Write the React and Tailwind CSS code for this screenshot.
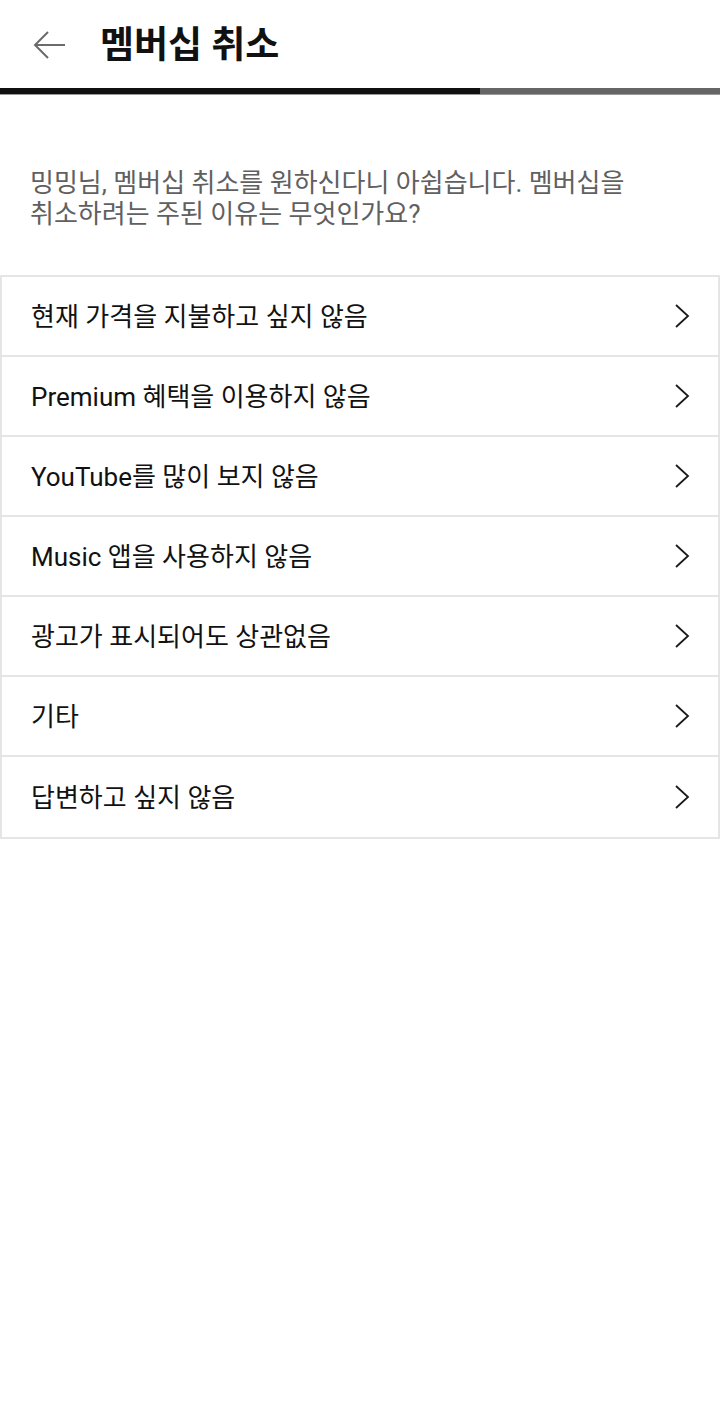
import React from "react";

const reasons = [
  "현재 가격을 지불하고 싶지 않음",
  "Premium 혜택을 이용하지 않음",
  "YouTube를 많이 보지 않음",
  "Music 앱을 사용하지 않음",
  "광고가 표시되어도 상관없음",
  "기타",
  "답변하고 싶지 않음",
];

function BackArrow() {
  return (
    <svg width="34" height="30" viewBox="0 0 34 30" fill="none" stroke="#6b6b6b" strokeWidth="2">
      <path d="M2 15 H32" />
      <path d="M15 2 L2 15 L15 28" />
    </svg>
  );
}

function Chevron() {
  return (
    <svg width="16" height="26" viewBox="0 0 16 26" fill="none" stroke="#1a1a1a" strokeWidth="1.8">
      <path d="M2 2 L14 13 L2 24" />
    </svg>
  );
}

export default function App() {
  return (
    <div
      className="w-[720px] h-[1404px] bg-white"
      style={{ fontFamily: 'Roboto, "Noto Sans CJK KR", sans-serif' }}
    >
      {/* Header */}
      <div className="h-[88px] flex items-center">
        <div className="w-[100px] pl-[33px] pt-[2px] flex items-center">
          <BackArrow />
        </div>
        <h1 className="text-[37px] font-bold text-[#111] leading-none pt-[2px]">멤버십 취소</h1>
      </div>

      {/* Progress */}
      <div className="flex h-[6px]">
        <div className="w-[480px] bg-[#111]" />
        <div className="flex-1 bg-[#666]" />
      </div>
      <div className="h-[1px] bg-[#9a9a9a]" />

      {/* Question */}
      <p className="px-[30px] pt-[73px] pb-[45px] text-[26px] leading-[31px] text-[#606060]">
        밍밍님, 멤버십 취소를 원하신다니 아쉽습니다. 멤버십을
        <br />
        취소하려는 주된 이유는 무엇인가요?
      </p>

      {/* Reasons */}
      <div className="border-2 border-[#e5e5e5]">
        {reasons.map((r, i) => (
          <div
            key={r}
            className={
              "h-[80px] flex items-center justify-between pl-[29px] pr-[28px] " +
              (i < reasons.length - 1 ? "border-b-2 border-[#e5e5e5]" : "")
            }
          >
            <span className="text-[26px] text-[#111] pt-[2px]">{r}</span>
            <Chevron />
          </div>
        ))}
      </div>
    </div>
  );
}
